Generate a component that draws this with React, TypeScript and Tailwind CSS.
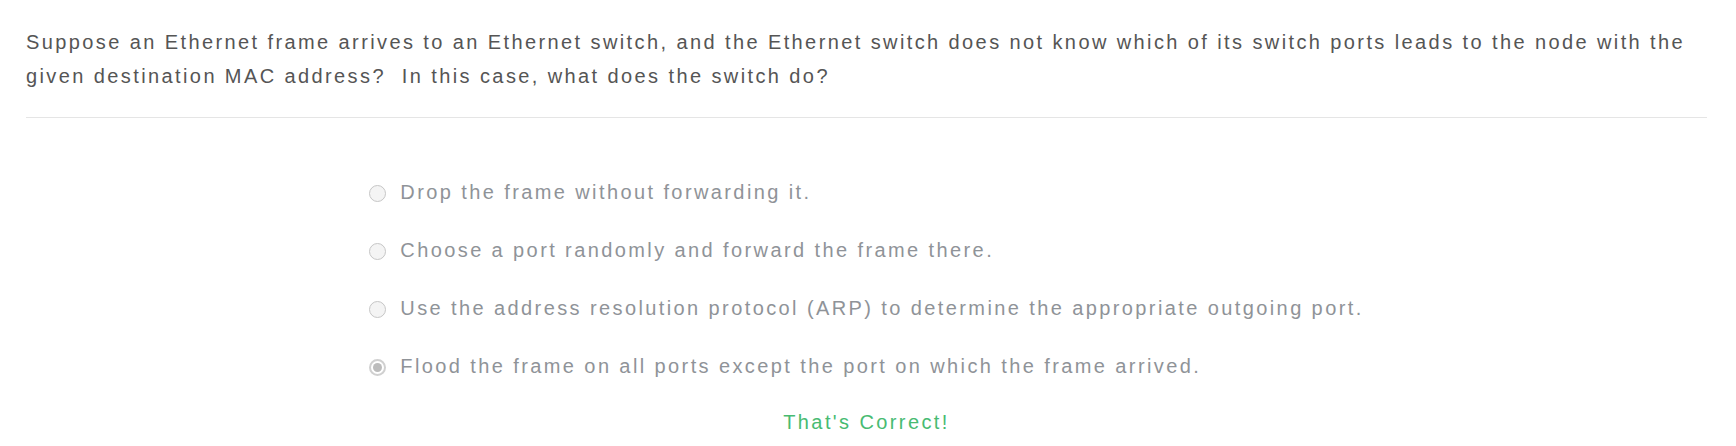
import React from "react";

const options = [
  { text: "Drop the frame without forwarding it.", checked: false },
  { text: "Choose a port randomly and forward the frame there.", checked: false },
  { text: "Use the address resolution protocol (ARP) to determine the appropriate outgoing port.", checked: false },
  { text: "Flood the frame on all ports except the port on which the frame arrived.", checked: true },
];

function Radio({ checked }: { checked: boolean }) {
  if (checked) {
    return (
      <span className="mt-[3px] flex h-[17px] w-[17px] shrink-0 items-center justify-center rounded-full border-2 border-[#d0d0d0] bg-white">
        <span className="h-[9px] w-[9px] rounded-full bg-[#bcbcbc]" />
      </span>
    );
  }
  return (
    <span className="mt-[3px] h-[17px] w-[17px] shrink-0 rounded-full border border-[#c6c6c6] bg-[#f4f4f4]" />
  );
}

export default function App() {
  return (
    <div className="min-h-[446px] bg-white pl-[26px] pr-[29px] pt-[25px] font-['Liberation_Sans',Arial,sans-serif]">
      <p className="text-[20px] leading-[34px] tracking-[2.4px] text-[#555555]">
        Suppose an Ethernet frame arrives to an Ethernet switch, and the Ethernet switch does not know which of its switch ports leads to the node with the given destination MAC address?&nbsp; In this case, what does the switch do?
      </p>
      <div className="mt-[24px] border-t border-[#e5e5e5]" />
      <div className="flex justify-center pt-[60px]">
        <div className="flex flex-col gap-[30px]">
          {options.map((o) => (
            <label key={o.text} className="flex items-center gap-[14px] text-[20px] leading-[28px] tracking-[2.4px] text-[#8f9398]">
              <Radio checked={o.checked} />
              <span>{o.text}</span>
            </label>
          ))}
        </div>
      </div>
      <div className="mt-[28px] text-center text-[20px] leading-[28px] tracking-[2.4px] text-[#48bb72]">
        That's Correct!
      </div>
    </div>
  );
}
